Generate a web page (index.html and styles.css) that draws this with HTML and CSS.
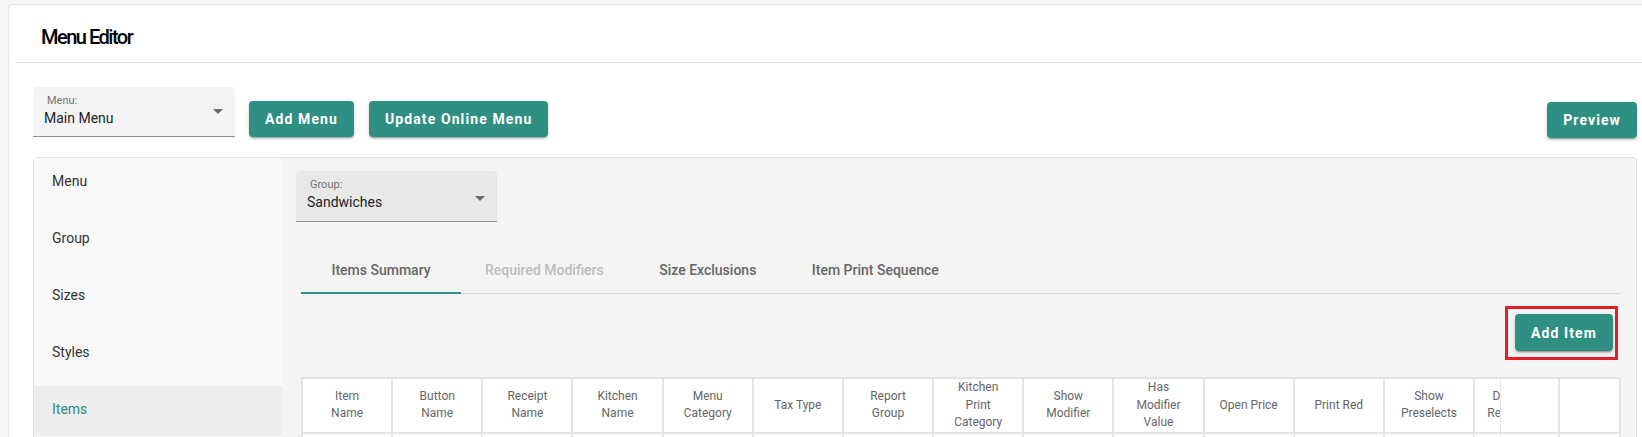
FILE: index.html
```html
<!DOCTYPE html>
<html lang="en">
<head>
    <meta charset="UTF-8">
    <meta name="viewport" content="width=device-width, initial-scale=1.0">
    <title>Menu Editor</title>
    <link rel="stylesheet" href="styles.css">
</head>
<body>
    <div class="card">
        <div class="card-header">
            <h1 class="title">Menu Editor</h1>
        </div>
        <div class="card-body">
            <div class="toolbar">
                <div class="select select-light">
                    <div class="select-text">
                        <span class="select-label">Menu:</span>
                        <span class="select-value">Main Menu</span>
                    </div>
                    <span class="caret"></span>
                </div>
                <button class="btn">Add Menu</button>
                <button class="btn btn-update">Update Online Menu</button>
                <button class="btn btn-preview">Preview</button>
            </div>

            <div class="editor">
                <ul class="side-nav">
                    <li>Menu</li>
                    <li>Group</li>
                    <li>Sizes</li>
                    <li>Styles</li>
                    <li class="active">Items</li>
                </ul>

                <div class="editor-main">
                    <div class="select select-dark">
                        <div class="select-text">
                            <span class="select-label">Group:</span>
                            <span class="select-value">Sandwiches</span>
                        </div>
                        <span class="caret"></span>
                    </div>

                    <div class="tabs">
                        <div class="tab active">Items Summary</div>
                        <div class="tab disabled">Required Modifiers</div>
                        <div class="tab">Size Exclusions</div>
                        <div class="tab">Item Print Sequence</div>
                    </div>

                    <div class="actions">
                        <span class="highlight">
                            <button class="btn">Add Item</button>
                        </span>
                    </div>

                    <div class="table-wrap">
                        <table class="items-table">
                            <colgroup>
                                <col class="c-std"><col class="c-std"><col class="c-std"><col class="c-std">
                                <col class="c-std"><col class="c-std"><col class="c-std"><col class="c-std">
                                <col class="c-std"><col class="c-std"><col class="c-std"><col class="c-std">
                                <col class="c-std"><col class="c-narrow"><col class="c-std"><col class="c-std">
                                <col class="c-action"><col class="c-action">
                            </colgroup>
                            <thead>
                                <tr>
                                    <th>Item<br>Name</th>
                                    <th>Button<br>Name</th>
                                    <th>Receipt<br>Name</th>
                                    <th>Kitchen<br>Name</th>
                                    <th>Menu<br>Category</th>
                                    <th>Tax Type</th>
                                    <th>Report<br>Group</th>
                                    <th>Kitchen<br>Print<br>Category</th>
                                    <th>Show<br>Modifier</th>
                                    <th>Has<br>Modifier<br>Value</th>
                                    <th>Open Price</th>
                                    <th>Print Red</th>
                                    <th>Show<br>Preselects</th>
                                    <th>Dine In<br>Required</th>
                                    <th>Sort<br>Order</th>
                                    <th>Active</th>
                                    <th class="sticky sticky-edit"></th>
                                    <th class="sticky sticky-delete"></th>
                                </tr>
                            </thead>
                            <tbody>
                                <tr>
                                    <td></td><td></td><td></td><td></td>
                                    <td></td><td></td><td></td><td></td>
                                    <td></td><td></td><td></td><td></td>
                                    <td></td><td></td><td></td><td></td>
                                    <td class="sticky sticky-edit"></td>
                                    <td class="sticky sticky-delete"></td>
                                </tr>
                            </tbody>
                        </table>
                    </div>
                </div>
            </div>
        </div>
    </div>
</body>
</html>
```

FILE: styles.css
```css
html, body {
    margin: 0;
    overflow: hidden;
    background: #f6f6f6;
    font-family: Roboto, "Liberation Sans", sans-serif;
}
.card {
    margin: 4px -4px 0 8px;
    height: 600px;
    background: #fff;
    border: 1px solid #e6e6e6;
    border-radius: 4px;
}
.card-header {
    margin-left: 6px;
    padding: 12px 0 5px 26px;
    border-bottom: 1px solid #e3e3e3;
}
.title {
    margin: 0;
    font-size: 20px;
    line-height: 40px;
    font-weight: 500;
    letter-spacing: -1.5px;
    color: #000;
}
.card-body {
    padding: 0 8px 0 24px;
}
.toolbar {
    display: flex;
    align-items: flex-end;
    gap: 14px;
    padding: 24px 0 20px 0;
}

/* filled select */
.select {
    box-sizing: border-box;
    display: flex;
    justify-content: space-between;
    width: 202px;
    height: 50px;
    padding: 7px 12px 0 11px;
    border-bottom: 1px solid #8d8d8d;
    border-radius: 4px 4px 0 0;
}
.select-light {
    background: #f4f4f4;
}
.select-dark {
    width: 201px;
    height: 51px;
    background: #e8e8e8;
}
.select-text {
    display: flex;
    flex-direction: column;
}
.select-label {
    margin-left: 3px;
    font-size: 11px;
    line-height: 14px;
    color: #737373;
}
.select-value {
    font-size: 14px;
    line-height: 20px;
    color: #222;
}
.caret {
    margin-top: 15px;
    width: 0;
    height: 0;
    border-left: 5px solid transparent;
    border-right: 5px solid transparent;
    border-top: 5px solid #6b6b6b;
}
.select-dark .caret {
    margin-top: 18px;
}

.btn {
    height: 36px;
    padding: 0 16px;
    border: none;
    border-radius: 4px;
    background: #2f8f82;
    color: #fff;
    font-family: inherit;
    font-size: 14px;
    font-weight: 700;
    letter-spacing: 1.1px;
    cursor: pointer;
    box-shadow: 0 3px 1px -2px rgba(0, 0, 0, 0.2), 0 2px 2px rgba(0, 0, 0, 0.14), 0 1px 5px rgba(0, 0, 0, 0.12);
}
.btn:hover {
    background: #277a6f;
}
.btn-update {
    margin-left: 1px;
}
.btn-preview {
    margin-left: auto;
    margin-bottom: -1px;
}

/* editor panel */
.editor {
    display: flex;
    min-height: 400px;
    background: #f4f4f4;
    border: 1px solid #e1e1e1;
    border-radius: 4px;
}
.side-nav {
    width: 248px;
    margin: 0;
    padding: 0;
    list-style: none;
    background: #f9f9f9;
}
.side-nav li {
    height: 50px;
    line-height: 46px;
    margin-bottom: 7px;
    padding-left: 18px;
    font-size: 14px;
    color: #333;
}
.side-nav li.active {
    background: #eeeeee;
    color: #2a8a7d;
}
.editor-main {
    flex: 1;
    min-width: 0;
    padding: 13px 15px 0 14px;
}

.tabs {
    display: flex;
    box-sizing: border-box;
    height: 48px;
    margin: 24px 0 0 5px;
    border-bottom: 1px solid #d9d9d9;
}
.tab {
    box-sizing: border-box;
    display: flex;
    align-items: center;
    justify-content: center;
    min-width: 160px;
    height: 48px;
    padding: 0 24px;
    font-size: 14px;
    font-weight: 500;
    color: #666;
}
.tab.active {
    box-shadow: inset 0 -2px 0 #2f8f82;
}
.tab.disabled {
    color: #bdbdbd;
}

.actions {
    display: flex;
    justify-content: flex-end;
    margin: 20px 8px 26px 5px;
}
.actions .btn {
    height: 37px;
}
.highlight {
    position: relative;
    display: inline-flex;
}
.highlight::after {
    content: "";
    position: absolute;
    top: -8px;
    bottom: -9px;
    left: -10px;
    right: -5px;
    border: 3px solid #e41e26;
    pointer-events: none;
}

/* items table */
.table-wrap {
    margin-left: 5px;
    overflow: hidden;
}
.items-table {
    table-layout: fixed;
    width: 1549px;
    border-collapse: separate;
    border-spacing: 0;
    background: #fff;
    border-left: 2px solid #e4e4e4;
}
.c-std {
    width: 88px;
}
.c-narrow {
    width: 72px;
}
.c-action {
    width: 59px;
}
.items-table th,
.items-table td {
    box-sizing: border-box;
    padding: 0 6px;
    border-right: 2px solid #e4e4e4;
    border-bottom: 2px solid #e4e4e4;
    background: #fff;
    font-size: 12px;
    font-weight: 400;
    text-align: center;
    color: #666;
    overflow: hidden;
    white-space: nowrap;
}
.items-table th {
    height: 54px;
    line-height: 17.5px;
    border-top: 2px solid #e4e4e4;
}
.items-table td {
    height: 44px;
}
.items-table .sticky {
    position: sticky;
}
.items-table .sticky-edit {
    right: 61px;
    border-left: 1px solid #e8e8e8;
}
.items-table .sticky-delete {
    right: 0;
}
```
